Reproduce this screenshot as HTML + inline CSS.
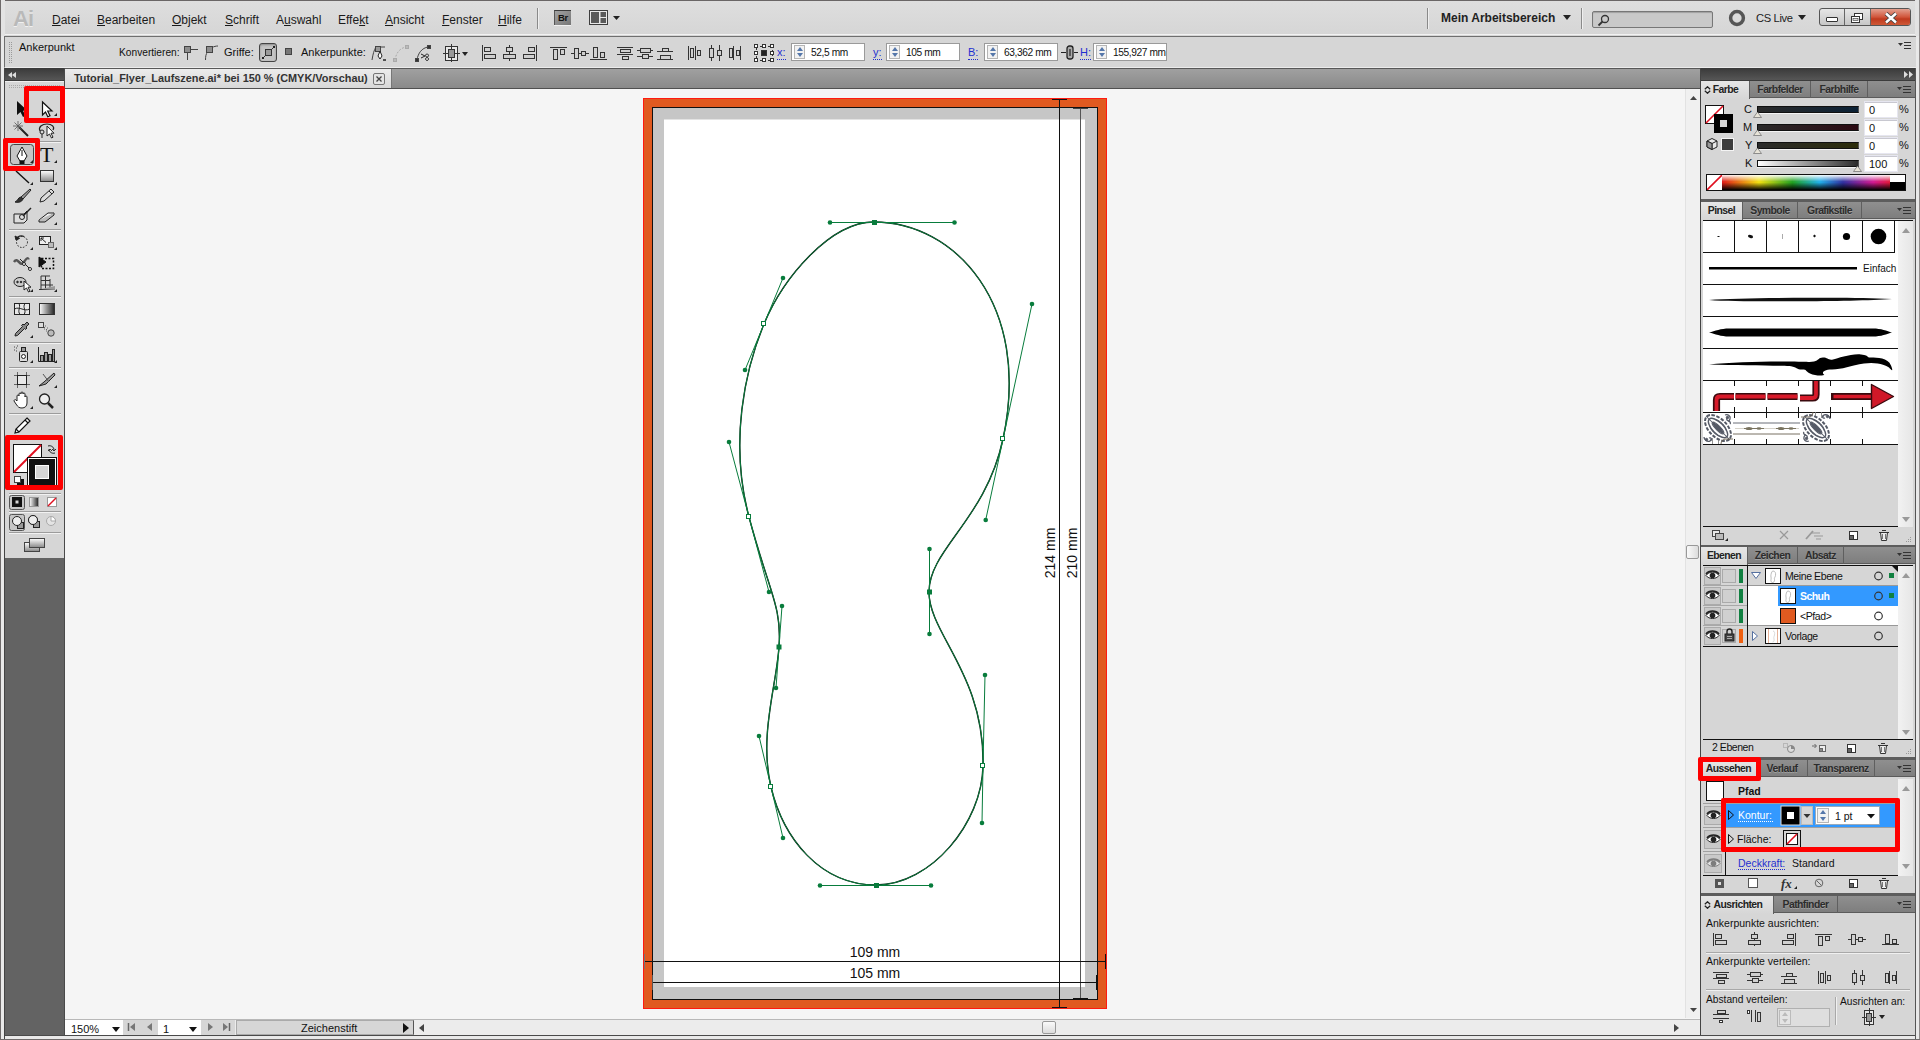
<!DOCTYPE html>
<html>
<head>
<meta charset="utf-8">
<title>Illustrator</title>
<style>
*{box-sizing:border-box;margin:0;padding:0}
html,body{width:1920px;height:1040px;overflow:hidden;background:#d6d6d6;font-family:"Liberation Sans",sans-serif;font-size:11px;color:#111}
.a{position:absolute}
.t{position:absolute;white-space:nowrap;line-height:1}
u{text-decoration:underline}
/* frame */
#frameL{left:0;top:0;width:5px;height:1040px;background:linear-gradient(90deg,#6e6a6a 0,#6e6a6a 1px,#e9e9e9 1px,#e9e9e9 4px,#444 4px)}
#frameR{left:1915px;top:0;width:5px;height:1040px;background:linear-gradient(90deg,#555 0,#555 1px,#e9e9e9 1px,#e9e9e9 4px,#8e8a8a 4px)}
#frameB{left:0;top:1035px;width:1920px;height:5px;background:linear-gradient(180deg,#4a4a4a 0,#4a4a4a 1px,#e9e9e9 1px,#e9e9e9 4px,#6e6a6a 4px)}
/* menubar */
#menubar{left:5px;top:0;width:1910px;height:36px;background:linear-gradient(180deg,#6a6666 0,#6a6666 1px,#dedede 1px,#d6d6d6 34px,#f2f2f2 34px,#f2f2f2 35px,#d6d6d6 35px)}
.mi{position:absolute;top:13px;font-size:12px;color:#1a1a1a;white-space:nowrap;line-height:15px}
.vsep{position:absolute;width:1px;background:#8a8a8a;box-shadow:1px 0 0 #efefef}
/* control bar */
#ctrl{left:4px;top:36px;width:1912px;height:32px;background:#d6d6d6;border-top:1px solid #6f6f6f;border-left:1px solid #6f6f6f;border-bottom:1px solid #ececec}
.ct{position:absolute;font-size:11px;color:#111;white-space:nowrap;line-height:13px}
.inp{position:absolute;background:#fff;border:1px solid #9a9a9a;height:18px}
.inp span{position:absolute;left:19px;top:2px;font-size:10.2px;letter-spacing:-.4px;line-height:13px;white-space:nowrap}
.spin{position:absolute;left:2px;top:1px;width:11px;height:14px;border:1px solid #b5b5b5;background:#f2f2f2}
.spin:before{content:"";position:absolute;left:2px;top:1px;border:3px solid transparent;border-bottom:4px solid #5577aa;border-top:0}
.spin:after{content:"";position:absolute;left:2px;top:7px;border:3px solid transparent;border-top:4px solid #5577aa;border-bottom:0}
.lbl{position:absolute;font-size:11px;color:#1f2fd0;line-height:13px;border-bottom:1px dotted #1f2fd0;white-space:nowrap}
/* tools */
#tools{left:5px;top:68px;width:60px;height:967px;background:#636363;border-right:1px solid #4a4a4a}
#toolsHead{left:0;top:0;width:59px;height:13px;background:linear-gradient(180deg,#3a3a3a,#555 90%,#2c2c2c)}
#toolsBody{left:0;top:13px;width:59px;height:477px;background:#d6d6d6;border-top:1px solid #efefef}
/* doc */
#tabbar{left:65px;top:68px;width:1635px;height:21px;background:linear-gradient(180deg,#a0a0a0,#8a8a8a);border-top:1px solid #585858;border-bottom:1px solid #505050}
#doctab{left:0;top:0;width:327px;height:19px;background:linear-gradient(180deg,#ececec,#d8d8d8);border-right:1px solid #777}
#canvas{left:65px;top:89px;width:1620px;height:930px;background:#f5f5f5;overflow:hidden}
#vscroll{left:1685px;top:89px;width:16px;height:929px;background:#f0f0f0;border-left:1px solid #e2e2e2}
#status{left:65px;top:1018px;width:1636px;height:17px;background:#ececec;border-top:1px solid #f5f5f5}
/* right dock */
#dock{left:1701px;top:68px;width:214px;height:967px;background:#5d5d5d}
#dockHead{left:0;top:0;width:214px;height:13px;background:linear-gradient(180deg,#3a3a3a,#555 90%,#2c2c2c)}
.panel{position:absolute;left:0;width:214px;background:#d6d6d6}
.tabs{position:absolute;left:0;top:0;width:214px;height:17px;background:linear-gradient(180deg,#8f8f8f,#7e7e7e);border-bottom:1px solid #5b5b5b}
.tab{position:absolute;top:0;height:17px;font-size:10.4px;letter-spacing:-.55px;font-weight:bold;color:#2c2c2c;line-height:18px;text-align:center;border-right:1px solid #5f5f5f;text-shadow:0 1px 0 rgba(255,255,255,.25)}
.tab.on{background:linear-gradient(180deg,#e6e6e6,#d6d6d6);height:18px;color:#222}
.sl{width:102px;height:7px;border:1px solid #111;border-right-color:#555;box-shadow:0 1px 0 #f4f4f4}
.vi{width:34px;height:17px;background:#fff;border:1px solid #e6e6f0;box-shadow:inset 0 1px 0 #c8c8d0}
.vi span{position:absolute;left:4px;top:3px;font-size:11px;line-height:11px}
.rb{border:5px solid #fe0000;border-radius:2px}
.pm{position:absolute;right:4px;top:5px;width:14px;height:8px}
</style>
</head>
<body>
<div id="frameB" class="a"></div><div id="frameL" class="a" style="height:1039px"></div><div id="frameR" class="a" style="height:1039px"></div>

<!-- MENUBAR -->
<div class="a" style="left:1px;top:0;width:4px;height:36px;background:#e3e3e3"></div>
<div class="a" style="left:1915px;top:0;width:4px;height:36px;background:#e3e3e3"></div>
<div id="menubar" class="a">
<div class="t" style="left:8px;top:8px;font-size:22px;font-weight:bold;color:#b9b9b9;letter-spacing:-1px;text-shadow:0 1px 0 #f0f0f0">Ai</div>
<div class="mi" style="left:47px"><u>D</u>atei</div>
<div class="mi" style="left:92px"><u>B</u>earbeiten</div>
<div class="mi" style="left:167px"><u>O</u>bjekt</div>
<div class="mi" style="left:220px"><u>S</u>chrift</div>
<div class="mi" style="left:271px">A<u>u</u>swahl</div>
<div class="mi" style="left:333px">Effe<u>k</u>t</div>
<div class="mi" style="left:380px"><u>A</u>nsicht</div>
<div class="mi" style="left:437px"><u>F</u>enster</div>
<div class="mi" style="left:493px"><u>H</u>ilfe</div>
<div class="vsep" style="left:532px;top:8px;height:21px"></div>
<!-- Br button -->
<div class="a" style="left:549px;top:10px;width:17px;height:15px;background:linear-gradient(135deg,#a2a2a2,#767676);border-top:1px solid #3a3a3a;border-left:1px solid #555;box-shadow:0 1px 0 #f0f0f0"><div class="t" style="left:3px;top:2px;font-size:9.5px;font-weight:bold;color:#111;letter-spacing:-.3px">Br</div></div>
<!-- arrange docs -->
<svg class="a" style="left:584px;top:10px" width="36" height="16" viewBox="0 0 36 16"><rect x="0.5" y="0.5" width="18" height="14" fill="#e8e8e8" stroke="#3e3e3e"/><rect x="2" y="2" width="8" height="11" fill="#5a5a5a"/><rect x="11.500" y="2" width="5.500" height="5" fill="#5a5a5a"/><rect x="11.500" y="8" width="5.500" height="5" fill="#5a5a5a"/><path d="M24,6h7l-3.5,4z" fill="#222"/></svg>
<!-- right side -->
<div class="vsep" style="left:1422px;top:8px;height:21px"></div>
<div class="t" style="left:1436px;top:12px;font-size:12px;font-weight:bold;color:#222">Mein Arbeitsbereich</div>
<svg class="a" style="left:1558px;top:15px" width="9" height="6"><path d="M0,0h8l-4,5z" fill="#222"/></svg>
<div class="vsep" style="left:1576px;top:8px;height:21px"></div>
<div class="a" style="left:1587px;top:11px;width:121px;height:17px;background:#c9c9c9;border:1px solid #777;border-radius:2px;box-shadow:inset 0 1px 1px rgba(0,0,0,.2)"><svg class="a" style="left:4px;top:2px" width="14" height="13" viewBox="0 0 14 13"><circle cx="8" cy="5" r="3.5" fill="none" stroke="#333" stroke-width="1.3"/><path d="M5.5,7.5L1.5,11.5" stroke="#333" stroke-width="1.8"/></svg></div>
<svg class="a" style="left:1723px;top:9px" width="18" height="18" viewBox="0 0 18 18"><circle cx="9" cy="9" r="6.400" fill="none" stroke="#555" stroke-width="3.500"/></svg>
<div class="t" style="left:1751px;top:13px;font-size:11.2px;letter-spacing:-.35px;color:#222">CS Live</div>
<svg class="a" style="left:1793px;top:15px" width="9" height="6"><path d="M0,0h8l-4,5z" fill="#222"/></svg>
<!-- window buttons -->
<div class="a" style="left:1814px;top:8px;width:92px;height:18px;border:1px solid #555;border-radius:3px;background:linear-gradient(180deg,#e6e6e6,#c6c6c6);overflow:hidden">
  <div class="a" style="left:24px;top:0;width:1px;height:18px;background:#666"></div>
  <div class="a" style="left:50px;top:0;width:1px;height:18px;background:#666"></div>
  <div class="a" style="left:51px;top:0;width:41px;height:18px;background:linear-gradient(180deg,#e3a08f 0,#d1553a 45%,#bf3a1e 55%,#d4633f 100%)"></div>
  <div class="a" style="left:6px;top:8px;width:12px;height:5px;border:1px solid #333;background:#fff;border-radius:1px"></div>
  <svg class="a" style="left:30px;top:3px" width="14" height="12" viewBox="0 0 14 12"><rect x="4.5" y="1.5" width="8" height="6" fill="#fff" stroke="#333"/><rect x="1.5" y="4.5" width="8" height="6" fill="#fff" stroke="#333"/><rect x="3" y="6.5" width="5" height="2" fill="#ddd" stroke="#333" stroke-width=".6"/></svg>
  <svg class="a" style="left:64px;top:3px" width="14" height="12" viewBox="0 0 14 12"><path d="M2,1.5L12,10.5M12,1.5L2,10.5" stroke="#444" stroke-width="4.2"/><path d="M2,1.5L12,10.5M12,1.5L2,10.5" stroke="#fff" stroke-width="2.4"/></svg>
</div>
</div>

<!-- CONTROL BAR -->
<div id="ctrl" class="a">
<!-- ctrl coords: page x-5, y-37 -->
<svg class="a" style="left:4px;top:5px" width="4" height="22"><g fill="#9a9a9a"><rect x="0" y="0" width="1" height="1"/><rect x="2" y="0" width="1" height="1"/><rect x="0" y="2" width="1" height="1"/><rect x="2" y="2" width="1" height="1"/><rect x="0" y="4" width="1" height="1"/><rect x="2" y="4" width="1" height="1"/><rect x="0" y="6" width="1" height="1"/><rect x="2" y="6" width="1" height="1"/><rect x="0" y="8" width="1" height="1"/><rect x="2" y="8" width="1" height="1"/><rect x="0" y="10" width="1" height="1"/><rect x="2" y="10" width="1" height="1"/><rect x="0" y="12" width="1" height="1"/><rect x="2" y="12" width="1" height="1"/><rect x="0" y="14" width="1" height="1"/><rect x="2" y="14" width="1" height="1"/><rect x="0" y="16" width="1" height="1"/><rect x="2" y="16" width="1" height="1"/><rect x="0" y="18" width="1" height="1"/><rect x="2" y="18" width="1" height="1"/><rect x="0" y="20" width="1" height="1"/><rect x="2" y="20" width="1" height="1"/></g></svg>
<div class="ct" style="left:14px;top:4px">Ankerpunkt</div>
<div class="ct" style="left:114px;top:9px;font-size:10.2px">Konvertieren:</div>
<svg class="a" style="left:176px;top:7px" width="46" height="18" viewBox="0 0 46 18"><g stroke="#444" fill="none"><path d="M6.5,8v8M10,5.5h7"/><rect x="3.5" y="2.5" width="6" height="6" fill="#8d8d8d"/><path d="M24.5,16c0-4,.5-6,2-8M31,3.5c2,-1,4,-1.5,6,-1.5"/><rect x="25.500" y="2.500" width="6" height="6" fill="#8d8d8d"/></g></svg>
<div class="ct" style="left:219px;top:9px">Griffe:</div>
<div class="a" style="left:254px;top:6px;width:18px;height:19px;border:1px solid #444;border-radius:3px;background:#c4c4c4;box-shadow:inset 0 1px 2px rgba(0,0,0,.3)"><svg class="a" style="left:1px;top:1px" width="15" height="15" viewBox="0 0 15 15"><path d="M2,13L13,2" stroke="#333"/><rect x="4.500" y="4.500" width="6" height="6" fill="#9a9a9a" stroke="#333"/><rect x="1" y="12" width="2" height="2" fill="#222"/><rect x="12" y="1" width="2" height="2" fill="#222"/></svg></div>
<svg class="a" style="left:278px;top:9px" width="12" height="12"><rect x="2.500" y="2.500" width="6" height="6" fill="#777" stroke="#444"/></svg>
<div class="ct" style="left:296px;top:9px">Ankerpunkte:</div>
<!-- anchor tools -->
<svg class="a" style="left:366px;top:6px" width="100" height="20" viewBox="0 0 100 20">
 <g fill="none" stroke="#444"><path d="M1,17c1,-6 2,-10 4,-13h9"/><rect x="4.500" y="3.500" width="5" height="5" fill="#999"/><path d="M9,8l-2,5l2,3l2,-3z" fill="#fff" stroke="#222"/><path d="M12,17h3" stroke="#222" stroke-width="1.5"/></g>
 <g fill="none" stroke="#aaa"><path d="M24,17c1,-7 5,-12 11,-13" stroke-dasharray="2 1.5"/><rect x="22.500" y="15.500" width="3" height="3" fill="#bbb"/><rect x="34.500" y="2.500" width="3" height="3" fill="#bbb"/></g>
 <g fill="none" stroke="#444"><path d="M46,17c1,-7 5,-12 11,-13"/><rect x="44.500" y="15.500" width="3" height="3" fill="#333"/><rect x="56.500" y="2.500" width="3" height="3" fill="#333"/><path d="M50,11l4,2l-4,2M56,11a1.500,1.500 0 1 0 .1,0M56,14.500a1.500,1.500 0 1 0 .1,0" stroke="#222"/></g>
 <g><rect x="74.500" y="3.500" width="12" height="14" fill="#e8e8e8" stroke="#333"/><rect x="77.500" y="6.500" width="6" height="8" fill="#999" stroke="#333"/><path d="M80.500,1v5M80.500,15v4M72,10.500h5M84,10.500h5" stroke="#333"/><path d="M91,9h6l-3,4z" fill="#222"/></g>
</svg>
<!-- align icons group 1 -->
<svg class="a" style="left:475px;top:7px" width="268" height="18" viewBox="0 0 268 18" shape-rendering="crispEdges">
 <g fill="#d0d0d0" stroke="#333">
  <path d="M2.500,1v16" /><rect x="4.500" y="3.500" width="6" height="4"/><rect x="4.500" y="10.500" width="11" height="4"/>
  <path d="M29.500,1v16"/><rect x="26.500" y="3.500" width="6" height="4"/><rect x="23.500" y="10.500" width="12" height="4"/>
  <path d="M56.500,1v16"/><rect x="48.500" y="3.500" width="6" height="4"/><rect x="43.500" y="10.500" width="11" height="4"/>
  <path d="M70,3.500h17"/><rect x="73.500" y="5.500" width="4" height="10"/><rect x="80.500" y="5.500" width="4" height="5"/>
  <path d="M91,9.500h18"/><rect x="94.500" y="4.500" width="4" height="10"/><rect x="101.500" y="7.500" width="4" height="4"/>
  <path d="M110,15.500h17"/><rect x="113.500" y="3.500" width="4" height="10"/><rect x="120.500" y="8.500" width="4" height="5"/>
  <g transform="translate(-3,0)"><path d="M140,3.500h16M140,10.500h16"/><rect x="143.500" y="5.500" width="10" height="3"/><rect x="145.500" y="12.500" width="6" height="3"/>
  <path d="M160,6.500h16M160,12.500h16"/><rect x="163.500" y="4.500" width="10" height="4"/><rect x="165.500" y="10.500" width="6" height="4"/>
  <path d="M180,7.500h16M180,15.500h16"/><rect x="185.500" y="4.500" width="6" height="3"/><rect x="183.500" y="11.500" width="10" height="4"/>
  <path d="M211.500,2v14M218.500,2v14"/><rect x="213.500" y="4.500" width="3" height="9"/><rect x="220.500" y="6.500" width="3" height="5"/>
  <path d="M234.500,1v16M242.500,1v16"/><rect x="232.500" y="4.500" width="4" height="9"/><rect x="240.500" y="6.500" width="4" height="5"/>
  <path d="M256.500,2v14M263.500,2v14"/><rect x="252.500" y="4.500" width="3" height="9"/><rect x="259.500" y="6.500" width="3" height="5"/></g>
 </g>
</svg>
<!-- reference point -->
<svg class="a" style="left:748px;top:6px" width="22" height="20" viewBox="0 0 22 20" shape-rendering="crispEdges"><g fill="#fff" stroke="#333"><path d="M3,3h16v14h-16z" fill="none" stroke-dasharray="2 2"/><rect x="1.500" y="1.500" width="3" height="3"/><rect x="9.500" y="1.500" width="3" height="3"/><rect x="17.500" y="1.500" width="3" height="3"/><rect x="1.500" y="8.500" width="3" height="3"/><rect x="17.500" y="8.500" width="3" height="3"/><rect x="1.500" y="15.500" width="3" height="3"/><rect x="9.500" y="15.500" width="3" height="3"/><rect x="17.500" y="15.500" width="3" height="3"/><rect x="8.500" y="7.500" width="5" height="5" fill="#222"/></g></svg>
<div class="lbl" style="left:772px;top:9px">x:</div>
<div class="inp" style="left:786px;top:6px;width:74px"><div class="spin"></div><span>52,5 mm</span></div>
<div class="lbl" style="left:868px;top:9px">y:</div>
<div class="inp" style="left:881px;top:6px;width:74px"><div class="spin"></div><span>105 mm</span></div>
<div class="lbl" style="left:963px;top:9px">B:</div>
<div class="inp" style="left:979px;top:6px;width:74px"><div class="spin"></div><span>63,362 mm</span></div>
<svg class="a" style="left:1056px;top:7px" width="18" height="18" viewBox="0 0 18 18"><path d="M0,8.500h5M13,8.500h4" stroke="#222" stroke-width="1.2"/><rect x="6" y="2" width="6" height="13" rx="2.500" fill="#aaa" stroke="#222" stroke-width="1.300"/><path d="M9,5v7" stroke="#222" stroke-width="1.200"/></svg>
<div class="lbl" style="left:1075px;top:9px">H:</div>
<div class="inp" style="left:1088px;top:6px;width:74px"><div class="spin"></div><span>155,927 mm</span></div>
<!-- panel menu -->
<svg class="a" style="left:1893px;top:4px" width="14" height="9" viewBox="0 0 14 9"><path d="M0,2h5l-2.500,3z" fill="#333"/><path d="M6,1.500h7M6,4.500h7M6,7.500h7" stroke="#333"/></svg>
</div>

<!-- TOOLS -->
<div id="tools" class="a">
<div id="toolsHead" class="a"><svg class="a" style="left:3px;top:4px" width="10" height="6"><path d="M4,0v6l-4,-3zM8,0v6l-4,-3z" fill="#ddd"/></svg></div>
<div id="toolsBody" class="a">
<!-- toolsBody coords: page x-5, y-82 (1px border-top) -->
<svg class="a" style="left:0;top:0" width="59" height="476" viewBox="5 82 59 476">
<defs>
 <linearGradient id="gH" x1="0" x2="1"><stop offset="0" stop-color="#fff"/><stop offset="1" stop-color="#222"/></linearGradient>
 <linearGradient id="gV" x1="0" x2="0" y1="0" y2="1"><stop offset="0" stop-color="#fff"/><stop offset="1" stop-color="#888"/></linearGradient>
 <path id="tri" d="M0,3L3,0V3z" fill="#222"/>
</defs>
<!-- grip -->
<g fill="#aaa"><path d="M9,85h1v1h-1zM11,85h1v1h-1zM13,85h1v1h-1zM15,85h1v1h-1zM17,85h1v1h-1zM19,85h1v1h-1zM21,85h1v1h-1zM23,85h1v1h-1zM25,85h1v1h-1zM27,85h1v1h-1zM29,85h1v1h-1zM31,85h1v1h-1zM33,85h1v1h-1zM35,85h1v1h-1zM37,85h1v1h-1zM39,85h1v1h-1zM41,85h1v1h-1zM43,85h1v1h-1zM45,85h1v1h-1zM47,85h1v1h-1zM49,85h1v1h-1zM51,85h1v1h-1zM53,85h1v1h-1zM55,85h1v1h-1zM57,85h1v1h-1zM59,85h1v1h-1z"/><path d="M9,87h1v1h-1zM11,87h1v1h-1zM13,87h1v1h-1zM15,87h1v1h-1zM17,87h1v1h-1zM19,87h1v1h-1zM21,87h1v1h-1zM23,87h1v1h-1zM25,87h1v1h-1zM27,87h1v1h-1zM29,87h1v1h-1zM31,87h1v1h-1zM33,87h1v1h-1zM35,87h1v1h-1zM37,87h1v1h-1zM39,87h1v1h-1zM41,87h1v1h-1zM43,87h1v1h-1zM45,87h1v1h-1zM47,87h1v1h-1zM49,87h1v1h-1zM51,87h1v1h-1zM53,87h1v1h-1zM55,87h1v1h-1zM57,87h1v1h-1zM59,87h1v1h-1z"/></g>
<!-- separators -->
<g stroke="#9c9c9c" shape-rendering="crispEdges"><path d="M9,141.500h52M9,229.500h52M9,296.500h52M9,342.500h52M9,367.500h52M9,413.500h52M9,493.500h52M9,511.500h52M9,532.500h52"/></g>
<g stroke="#f2f2f2" shape-rendering="crispEdges"><path d="M9,142.500h52M9,230.500h52M9,297.500h52M9,343.500h52M9,368.500h52M9,414.500h52M9,494.500h52M9,512.500h52M9,533.500h52"/></g>
<!-- row1: selection / direct selection -->
<path d="M17,101v14l3.500,-3l2.500,5l2.500,-1.200l-2.500,-5h4.500z" fill="#111"/>
<path d="M42.500,102v13l3,-3l2.300,4.800l2.200,-1l-2.300,-4.800h4.300z" fill="#fff" stroke="#111" stroke-width="1.200"/>
<use href="#tri" x="54" y="113"/>
<!-- row2: wand / lasso -->
<g stroke="#222" fill="none"><path d="M19,127l9,9" stroke-width="2"/><path d="M18,121v10M13,126h10M14.500,122.500l7,7M21.500,122.500l-7,7" stroke="#555" stroke-width=".8"/></g>
<g stroke="#222" fill="none"><path d="M40,131c-2,-4 2,-7 7,-7s8,3 6,6" stroke-width="1.200"/><circle cx="42" cy="132" r="2" /><path d="M42,134v4"/><path d="M47,126v10l2.500,-2l2,4l1.500,-.8l-2,-4h3z" fill="#fff"/></g>
<!-- row3: pen (active) / type -->
<rect x="10.500" y="144.500" width="23" height="20" rx="3" fill="#c6c6c6" stroke="#444"/>
<g stroke="#111" fill="#fff"><path d="M22,147l5,9l-3,5h-4l-3,-5z"/><path d="M22,150v6" /><rect x="20" y="161" width="4" height="2.500" fill="#111"/></g>
<use href="#tri" x="30" y="160"/>
<text x="40" y="162" font-family="Liberation Serif" font-size="22" fill="#111">T</text>
<use href="#tri" x="54" y="160"/>
<!-- row4: line / rect -->
<path d="M16,171l13,12" stroke="#111" stroke-width="1.400"/><use href="#tri" x="30" y="182"/>
<rect x="40.500" y="170.500" width="13" height="11" fill="url(#gV)" stroke="#333"/><use href="#tri" x="54" y="182"/>
<!-- row5: brush / pencil -->
<g stroke="#222" fill="#999"><path d="M30,189l-9,8l2,2l8,-9z"/><path d="M21,197c-3,0 -3,4 -6,5c3,1 7,0 8,-3z" fill="#333"/></g>
<g stroke="#222" fill="#ddd"><path d="M51,189l3,3l-10,9l-4,1l1,-4z"/><path d="M49,191l3,3" /></g><use href="#tri" x="54" y="202"/>
<!-- row6: blob / eraser -->
<g stroke="#222" fill="#ddd"><path d="M14,214h10l3,-3v9l-3,3h-10z"/><path d="M31,208l-8,8" stroke-width="1.500"/><circle cx="22" cy="217" r="2.500" fill="none"/></g>
<g stroke="#222" fill="#eee"><path d="M39,220l9,-7h6l-9,7z"/><path d="M39,220v2h6l9,-7v-2" fill="#bbb"/></g><use href="#tri" x="54" y="222"/>
<!-- row7: rotate / scale -->
<g stroke="#222" fill="none"><circle cx="22" cy="242" r="5.500" stroke-dasharray="1.500 1.500"/><path d="M16,239a6,6 0 0 1 8,-2.500" stroke-width="1.200"/><path d="M15,236l1,4l3.500,-1.500z" fill="#222"/></g><use href="#tri" x="30" y="247"/>
<g stroke="#222" fill="#eee"><rect x="39.500" y="236.500" width="11" height="8"/><rect x="48.500" y="242.500" width="5" height="5" fill="#bbb" stroke="#666"/><path d="M41,238l5,4.500M41,238h3M41,238v3" fill="none"/></g><use href="#tri" x="54" y="247"/>
<!-- row8: width / free transform -->
<g stroke="#222" fill="none"><path d="M14,262c4,-6 6,6 10,0s4,-3 5,-4" stroke-width="2.500" stroke="#555"/><path d="M20,259l10,10"/><circle cx="24" cy="264" r="1.500" fill="#fff"/><circle cx="30" cy="269" r="1.500" fill="#fff"/></g>
<g stroke="#111" fill="none"><rect x="41.500" y="258.500" width="12" height="10" stroke-dasharray="2 1.500" stroke-width="1.500"/><path d="M39,257v10l7,-5z" fill="#111"/></g>
<!-- row9: shape builder / perspective grid -->
<g stroke="#222" fill="#ccc"><ellipse cx="20" cy="282" rx="6" ry="4.500"/><circle cx="17.500" cy="282" r=".8" fill="#222"/><circle cx="21" cy="282" r=".8" fill="#222"/><path d="M24,281v9l2.500,-2l2,4l1.500,-.8l-2,-4h3z" fill="#fff"/></g><use href="#tri" x="30" y="289"/>
<g stroke="#333" fill="none"><path d="M41,276v13M45.500,276v13M50,279v10M41,276h9M41,280.500h9M41,285h12M39,289.500h16" /><path d="M41,289l14,-3v4z" fill="#999" stroke="none"/></g><use href="#tri" x="54" y="289"/>
<!-- row10: mesh / gradient -->
<g stroke="#222" fill="#e8e8e8"><rect x="14.500" y="303.500" width="15" height="11"/><path d="M14.500,309c5,-3 10,3 15,0M19,303.500c2,4 -2,7 1,11M25,303.500c-3,4 2,7 -1,11" fill="none"/></g>
<rect x="39.500" y="303.500" width="15" height="11" fill="url(#gH)" stroke="#333"/>
<!-- row11: eyedropper / blend -->
<g stroke="#222" fill="#888"><path d="M29,324l-2,-2l-3,3l-1,-1l-1.500,1.500l1,1l-7,7l-.5,2.500l2.500,-.5l7,-7l1,1l1.500,-1.500l-1,-1z"/></g><use href="#tri" x="30" y="335"/>
<g stroke="#444" fill="#ddd"><rect x="38.500" y="322.500" width="5" height="5"/><circle cx="51" cy="333" r="3.200" fill="#bbb"/><path d="M44,327l1,1M46,329l1,1M45,326h1M47,328h1M44,329h1M46,331h1" stroke="#666"/></g>
<!-- row12: symbol sprayer / graph -->
<g stroke="#222" fill="#ddd"><rect x="19.500" y="351.500" width="8" height="10" rx="1"/><rect x="21.500" y="347.500" width="4" height="4" fill="#999"/><circle cx="23.500" cy="356.500" r="2" fill="#fff"/><path d="M14,347h1M16,348h1M14,350h1M17,346h1M16,351h1" stroke="#444"/></g><use href="#tri" x="30" y="360"/>
<g stroke="#222" fill="#999"><path d="M38.500,347v14.500h16" fill="none"/><rect x="40.500" y="355.500" width="3" height="6"/><rect x="44.500" y="352.500" width="3" height="9"/><rect x="48.500" y="354.500" width="3" height="7"/><rect x="52.500" y="349.500" width="2" height="12"/></g><use href="#tri" x="54" y="360"/>
<!-- row13: artboard / slice -->
<g stroke="#222" fill="none"><rect x="17.500" y="375.500" width="9" height="9" fill="#e8e8e8"/><path d="M14,375.500h3M27,375.500h3M14,384.500h3M27,384.500h3M17.500,372v3M26.500,372v3M17.500,385v3M26.500,385v3" stroke="#666"/></g>
<g stroke="#222" fill="#999"><path d="M54,373l-10,9l-5,4l7,-2l9,-9z"/><path d="M43,374l6,8" fill="none" stroke="#555"/></g><use href="#tri" x="54" y="385"/>
<!-- row14: hand / zoom -->
<g stroke="#222" fill="#fff"><path d="M17,401v-5a1,1 0 0 1 2,0v-2a1,1 0 0 1 2,0v-1a1,1 0 0 1 2,0v1a1,1 0 0 1 2,0v3a1,1 0 0 1 2,0v6c0,3 -2,5 -5,5s-4,-1 -6,-4l-2,-3c0,-1 1,-2 2,-1z"/></g><use href="#tri" x="30" y="406"/>
<g stroke="#222" fill="#eee"><circle cx="44.500" cy="399" r="5" stroke-width="1.300"/><path d="M48,403l5,5" stroke-width="2.500"/></g>
<!-- row15: single tool -->
<g stroke="#111" fill="#fff" stroke-width="1.200"><path d="M27,418l3,3l-11,11l-4,1l1,-4z"/><path d="M25,420l3,3M16,429l3,3" /></g>
<!-- fill / stroke -->
<rect x="13.500" y="444.500" width="28" height="28" fill="#fff" stroke="#111"/>
<path d="M14,472L41,445" stroke="#e01020" stroke-width="2"/>
<rect x="28.500" y="458.500" width="27" height="27" fill="#111" stroke="#fff"/><rect x="27.500" y="457.500" width="29" height="29" fill="none" stroke="#111"/>
<rect x="35.500" y="465.500" width="13" height="13" fill="#d6d6d6" stroke="#fff"/>
<g stroke="#222" fill="none"><path d="M48,446c3,-1 6,1 6,4M55,453c-3,1 -6,-1 -6,-4" /><path d="M52,449l2,2l2,-2M52,451l-2,-2l-2,2" stroke-width=".9"/></g>
<rect x="17.500" y="479.500" width="6" height="6" fill="#111" stroke="#111"/><rect x="14.500" y="476.500" width="6" height="6" fill="#fff" stroke="#444"/>
<!-- color modes -->
<rect x="9.500" y="495.500" width="15" height="14" rx="2" fill="#c6c6c6" stroke="#555"/>
<rect x="12.500" y="497.500" width="9" height="9" fill="#111" stroke="#111"/><rect x="15.500" y="500.500" width="3" height="3" fill="#d6d6d6"/>
<rect x="29.500" y="497.500" width="9" height="9" fill="url(#gH)" stroke="#999"/>
<rect x="47.500" y="497.500" width="9" height="9" fill="#fff" stroke="#999"/><path d="M48,506l8,-8" stroke="#e01020" stroke-width="1.500"/>
<!-- draw modes -->
<rect x="9.500" y="514.500" width="15" height="16" rx="2" fill="#c6c6c6" stroke="#555"/>
<g stroke="#222" fill="#eee"><rect x="17.500" y="522.500" width="6" height="6" fill="#999"/><circle cx="17" cy="521" r="4.500"/><circle cx="33" cy="520" r="4.500"/><rect x="33.500" y="521.500" width="6" height="6" fill="#999"/><circle cx="33" cy="520" r="4.500"/></g>
<circle cx="51" cy="521" r="4.500" fill="#e4e4e4" stroke="#aaa"/><path d="M51,521v-4.500a4.500,4.500 0 0 1 4.500,4.500z" fill="#fff" stroke="#aaa"/>
<!-- screen mode -->
<rect x="24.500" y="542.500" width="15" height="9" fill="url(#gV)" stroke="#444"/><rect x="29.500" y="538.500" width="15" height="9" fill="url(#gV)" stroke="#444"/>
</svg>
</div>
</div>

<!-- DOCUMENT -->
<div id="tabbar" class="a"><div id="doctab" class="a">
<div class="t" style="left:9px;top:4px;font-size:10.9px;font-weight:bold;color:#333">Tutorial_Flyer_Laufszene.ai* bei 150 % (CMYK/Vorschau)</div>
<svg class="a" style="left:308px;top:4px" width="13" height="12" viewBox="0 0 13 12"><rect x=".5" y=".5" width="11" height="11" rx="1.500" fill="#e4e4e4" stroke="#777"/><path d="M3.500,3.500l5,5M8.500,3.500l-5,5" stroke="#444" stroke-width="1.300"/></svg>
</div></div>
<div id="canvas" class="a">
<!-- canvas coords: page x-65, y-89 -->
<svg class="a" style="left:0;top:0" width="1620" height="929" viewBox="65 89 1620 929" shape-rendering="crispEdges">
  <!-- orange bleed rect with red selection edge -->
  <rect x="643.5" y="98.5" width="463" height="910" fill="#e05a20" stroke="#ff1a10" stroke-width="1"/>
  <!-- grey template + black frame -->
  <rect x="652.5" y="107.5" width="445" height="892" fill="#c6c6c6" stroke="#111" stroke-width="1"/>
  <!-- white page -->
  <rect x="664" y="119.500" width="421" height="867.500" fill="#ffffff" shape-rendering="auto"/>
  <!-- dimension lines vertical -->
  <line x1="1059.5" y1="99" x2="1059.5" y2="1007" stroke="#111"/>
  <line x1="1052" y1="99.5" x2="1067" y2="99.5" stroke="#111"/>
  <line x1="1052" y1="1007.5" x2="1067" y2="1007.5" stroke="#111"/>
  <line x1="1080.5" y1="108" x2="1080.5" y2="999" stroke="#555"/>
  <line x1="1073" y1="108.5" x2="1088" y2="108.5" stroke="#444"/>
  <line x1="1073" y1="998.5" x2="1088" y2="998.5" stroke="#111" stroke-width="2"/>
  <!-- dimension lines horizontal -->
  <line x1="644" y1="961.5" x2="1106" y2="961.5" stroke="#111"/>
  <line x1="644.5" y1="954" x2="644.5" y2="969" stroke="#777"/>
  <line x1="1105.5" y1="954" x2="1105.5" y2="969" stroke="#111"/>
  <line x1="652" y1="982.5" x2="1098" y2="982.5" stroke="#111"/>
  <line x1="652.5" y1="975" x2="652.5" y2="990" stroke="#555"/>
  <line x1="1097" y1="975" x2="1097" y2="990" stroke="#111" stroke-width="2"/>
</svg>
<div class="t" style="left:784px;top:856px;width:52px;text-align:center;font-size:14px;color:#111">109 mm</div>
<div class="t" style="left:784px;top:877px;width:52px;text-align:center;font-size:14px;color:#111">105 mm</div>
<svg class="a" style="left:0;top:0" width="1620" height="929" viewBox="65 89 1620 929">
  <text transform="translate(1055,553) rotate(-90)" text-anchor="middle" font-family="Liberation Sans" font-size="14" fill="#111">214 mm</text>
  <text transform="translate(1077,553) rotate(-90)" text-anchor="middle" font-family="Liberation Sans" font-size="14" fill="#111">210 mm</text>
  <!-- shoe path: black stroke + green selection -->
  <path id="shoe" d="M874,222 C954.5,222 1032,304 1003,439 C985.7,520 929,549 929,592 C929,634 985,675 983,766 C982,823 931,885 876,885 C820,885 783,838 771,787 C759,736 776,688 779,647 C782,606 769,592 749,517 C729,442 745,370 764,324 C783,278 830,222 874,222 Z" fill="none" stroke="#0c1a12" stroke-width="1.4"/>
  <path d="M874,222 C954.5,222 1032,304 1003,439 C985.7,520 929,549 929,592 C929,634 985,675 983,766 C982,823 931,885 876,885 C820,885 783,838 771,787 C759,736 776,688 779,647 C782,606 769,592 749,517 C729,442 745,370 764,324 C783,278 830,222 874,222 Z" fill="none" stroke="#087c3c" stroke-width="1"/>
  <g stroke="#087c3c" stroke-width="1" fill="#087c3c">
    <path d="M830,222.500H954.500 M783,278L745,370 M729,442L749,517L769,592 M1032,304L985.700,520 M929.500,549V634 M985,675L983,766L982,823 M820,885.500H931 M759,736L771,787L783,838 M782,606L779,647L776,688" fill="none"/>
    <g stroke="none"><circle cx="830" cy="222.500" r="2.300"/><circle cx="954.500" cy="222.500" r="2.300"/>
    <circle cx="783" cy="278" r="2.300"/><circle cx="745" cy="370" r="2.300"/>
    <circle cx="729" cy="442" r="2.300"/><circle cx="769" cy="592" r="2.300"/>
    <circle cx="1032" cy="304" r="2.300"/><circle cx="985.700" cy="520" r="2.300"/>
    <circle cx="929.500" cy="549" r="2.300"/><circle cx="929.500" cy="634" r="2.300"/>
    <circle cx="985" cy="675" r="2.300"/><circle cx="982" cy="823" r="2.300"/>
    <circle cx="820" cy="885.500" r="2.300"/><circle cx="931" cy="885.500" r="2.300"/>
    <circle cx="759" cy="736" r="2.300"/><circle cx="783" cy="838" r="2.300"/>
    <circle cx="782" cy="606" r="2.300"/><circle cx="776" cy="688" r="2.300"/>
    <!-- anchors -->
    <rect x="872" y="220" width="5" height="5"/>
    <rect x="927" y="589.500" width="5" height="5"/>
    <rect x="874" y="883" width="5" height="5"/>
    <rect x="776.500" y="644.500" width="5" height="5"/></g>
    <g fill="#fff" shape-rendering="crispEdges">
      <rect x="761.500" y="321.500" width="4" height="4"/>
      <rect x="746.500" y="514.500" width="4" height="4"/>
      <rect x="1000.500" y="436.500" width="4" height="4"/>
      <rect x="980.500" y="763.500" width="4" height="4"/>
      <rect x="768.500" y="784.500" width="4" height="4"/>
    </g>
  </g>
</svg>
</div>
<div id="vscroll" class="a">
<svg class="a" style="left:4px;top:7px" width="8" height="5"><path d="M0,4h7l-3.500,-4z" fill="#444"/></svg>
<svg class="a" style="left:4px;top:919px" width="8" height="5"><path d="M0,0h7l-3.500,4z" fill="#444"/></svg>
<div class="a" style="left:0px;top:456px;width:13px;height:14px;border:1px solid #999;border-radius:2px;background:linear-gradient(90deg,#fafafa,#dcdcdc)"></div>
</div>
<div id="status" class="a">
<!-- status coords: page x-65, y-1018 -->
<div class="a" style="left:0;top:0;width:1636px;height:1px;background:#b8b8b8"></div>
<div class="a" style="left:0;top:1px;width:58px;height:15px;background:#fff"></div>
<div class="t" style="left:6px;top:5px;font-size:11px">150%</div>
<svg class="a" style="left:47px;top:8px" width="9" height="6"><path d="M0,0h8l-4,5z" fill="#111"/></svg>
<div class="a" style="left:58px;top:1px;width:35px;height:15px;background:#d6d6d6"></div>
<svg class="a" style="left:62px;top:3px" width="30" height="11" viewBox="0 0 30 11"><path d="M1.500,1v8" stroke="#666" stroke-width="1.500"/><path d="M8,1v8l-5,-4zM25,1v8l-5,-4z" fill="#777"/></svg>
<div class="a" style="left:93px;top:1px;width:43px;height:15px;background:#fff"></div>
<div class="t" style="left:98px;top:5px;font-size:11px">1</div>
<svg class="a" style="left:124px;top:8px" width="9" height="6"><path d="M0,0h8l-4,5z" fill="#111"/></svg>
<div class="a" style="left:136px;top:1px;width:34px;height:15px;background:#d6d6d6"></div>
<svg class="a" style="left:141px;top:3px" width="30" height="11" viewBox="0 0 30 11"><path d="M2,1v8l5,-4zM17,1v8l5,-4z" fill="#777"/><path d="M23.500,1v8" stroke="#666" stroke-width="1.500"/></svg>
<div class="a" style="left:171px;top:1px;width:178px;height:15px;background:#d6d6d6;border:1px solid #aaa;border-right:1px solid #555"></div>
<div class="t" style="left:236px;top:4px;font-size:11px">Zeichenstift</div>
<svg class="a" style="left:338px;top:4px" width="7" height="10"><path d="M0,0v10l6,-5z" fill="#111"/></svg>
<svg class="a" style="left:354px;top:5px" width="6" height="8"><path d="M5,0v8l-5,-4z" fill="#444"/></svg>
<svg class="a" style="left:1609px;top:5px" width="6" height="8"><path d="M0,0v8l5,-4z" fill="#444"/></svg>
<div class="a" style="left:977px;top:2px;width:14px;height:13px;border:1px solid #999;border-radius:2px;background:linear-gradient(180deg,#fafafa,#dcdcdc)"></div>
</div>

<div class="a" style="left:1700px;top:68px;width:1px;height:967px;background:#444"></div>
<!-- RIGHT DOCK -->
<div id="dock" class="a">
<div id="dockHead" class="a"></div>
<svg class="a" style="left:203px;top:3px" width="10" height="7"><path d="M0,0v7l4,-3.500zM5,0v7l4,-3.500z" fill="#ddd"/></svg>
<!-- dock coords: page x-1701, y-68 -->
<!-- ===== FARBE ===== -->
<div class="panel" style="top:13px;height:118px">
 <div class="tabs">
  <div class="tab on" style="left:0;width:49px;padding-left:1px">Farbe</div>
  <div class="tab" style="left:49px;width:61px">Farbfelder</div>
  <div class="tab" style="left:110px;width:57px">Farbhilfe</div>
  <svg class="a" style="left:3px;top:5px" width="7" height="8" viewBox="0 0 7 8"><path d="M.8,3.200l2.700,-2.500l2.700,2.500M.8,4.800l2.700,2.500l2.700,-2.500" fill="none" stroke="#222" stroke-width="1.200"/></svg>
  <svg class="pm" viewBox="0 0 14 8"><path d="M0,1h5l-2.500,3z" fill="#333"/><path d="M6,.5h8M6,3.500h8M6,6.500h8" stroke="#333"/></svg>
 </div>
 <!-- fill/stroke swatch (panel coords: page x-1701,y-81) -->
 <svg class="a" style="left:0;top:18px" width="60" height="80" viewBox="1701 99 60 80">
  <rect x="1705.500" y="105.500" width="18" height="18" fill="#fff" stroke="#111"/><path d="M1706,123l17,-17" stroke="#e01020" stroke-width="1.600"/>
  <rect x="1714" y="114" width="19" height="19" fill="#000"/><rect x="1720" y="120" width="7" height="7" fill="#d6d6d6"/>
  <g stroke="#222" fill="#e8e8e8"><path d="M1707,141l5,-2.500l5,2.500v6l-5,2.500l-5,-2.500z"/><path d="M1707,141l5,2.500l5,-2.500M1712,143.500v6" fill="none"/><path d="M1707,141l5,2.500v6l-5,-2.500z" fill="#999"/></g>
  <rect x="1721.500" y="138.500" width="12" height="12" fill="#3c3c3c" stroke="#f4f4f4"/>
 </svg>
 <div class="t" style="left:43px;top:23px;font-size:11px">C</div>
 <div class="t" style="left:42px;top:41px;font-size:11px">M</div>
 <div class="t" style="left:44px;top:59px;font-size:11px">Y</div>
 <div class="t" style="left:44px;top:77px;font-size:11px">K</div>
 <div class="a sl" style="left:56px;top:25px;background:linear-gradient(90deg,#2b2b2b,#0c2236)"></div>
 <div class="a sl" style="left:56px;top:43px;background:linear-gradient(90deg,#2b2b2b,#2c0a12)"></div>
 <div class="a sl" style="left:56px;top:61px;background:linear-gradient(90deg,#2b2b2b,#2c2d0a)"></div>
 <div class="a sl" style="left:56px;top:79px;background:linear-gradient(90deg,#fff,#2b2b2b)"></div>
 <svg class="a" style="left:49px;top:29px" width="130" height="66" viewBox="0 0 130 66"><g fill="#e8e4d8" stroke="#777" stroke-width=".8"><path d="M3.500,7.500h8l-4,-5.500z"/><path d="M3.500,25.500h8l-4,-5.500z"/><path d="M3.500,43.500h8l-4,-5.500z"/><path d="M103.500,61.500h8l-4,-5.500z"/></g></svg>
 <div class="a vi" style="left:163px;top:20px"><span>0</span></div>
 <div class="a vi" style="left:163px;top:38px"><span>0</span></div>
 <div class="a vi" style="left:163px;top:56px"><span>0</span></div>
 <div class="a vi" style="left:163px;top:74px"><span>100</span></div>
 <div class="t" style="left:198px;top:23px;font-size:11px">%</div>
 <div class="t" style="left:198px;top:41px;font-size:11px">%</div>
 <div class="t" style="left:198px;top:59px;font-size:11px">%</div>
 <div class="t" style="left:198px;top:77px;font-size:11px">%</div>
 <!-- spectrum -->
 <div class="a" style="left:5px;top:93px;width:200px;height:17px;border:1px solid #111;background:#fff;overflow:hidden">
  <div class="a" style="left:15px;top:0;width:168px;height:15px;background:linear-gradient(180deg,rgba(255,255,255,.95) 0,rgba(255,255,255,0) 45%,rgba(0,0,0,0) 50%,rgba(0,0,0,1) 100%),linear-gradient(90deg,#e01818 0,#f0e010 22%,#20a020 42%,#20b0e8 58%,#3030a0 72%,#d01890 90%,#e01838 100%)"></div>
  <div class="a" style="left:183px;top:7px;width:15px;height:8px;background:#000"></div>
  <svg class="a" style="left:0;top:0" width="15" height="15"><path d="M0,15l15,-15" stroke="#e01020" stroke-width="1.600"/></svg>
 </div>
</div>
<!-- ===== PINSEL ===== -->
<div class="panel" style="top:134px;height:343px">
 <div class="tabs">
  <div class="tab on" style="left:0;width:42px">Pinsel</div>
  <div class="tab" style="left:42px;width:55px">Symbole</div>
  <div class="tab" style="left:97px;width:64px">Grafikstile</div>
  <svg class="pm" viewBox="0 0 14 8"><path d="M0,1h5l-2.500,3z" fill="#333"/><path d="M6,.5h8M6,3.500h8M6,6.500h8" stroke="#333"/></svg>
 </div>
 <!-- list (panel coords: page x-1701,y-202) -->
 <div class="a" style="left:2px;top:18px;width:210px;height:307px;background:#d6d6d6;border-top:1px solid #111;border-bottom:1px solid #111"></div>
 <svg class="a" style="left:2px;top:19px" width="195" height="226" viewBox="1703 221 195 226">
  <rect x="1703" y="221" width="195" height="224" fill="#fff"/>
  <g stroke="#111" shape-rendering="crispEdges"><path d="M1703,252.500h192M1703,284.500h195M1703,316.500h195M1703,348.500h195M1703,380.500h195M1703,412.500h195M1703,444.500h195"/><path d="M1734.500,221v32M1766.500,221v32M1798.500,221v32M1830.500,221v32M1862.500,221v32M1894.500,221v32"/>
  <path d="M1734.500,381v5M1766.500,381v5M1798.500,381v5M1830.500,381v5M1862.500,381v5M1734.500,407v11M1766.500,407v11M1798.500,407v11M1830.500,407v11M1862.500,407v11M1734.500,439v5M1766.500,439v5M1798.500,439v5M1830.500,439v5M1862.500,439v5"/></g>
  <!-- row1 dots -->
  <rect x="1717.500" y="236" width="2" height="1" fill="#111"/>
  <ellipse cx="1750.500" cy="236.500" rx="2.600" ry="1.500" transform="rotate(15 1750.500 236.500)" fill="#111"/>
  <rect x="1782" y="234" width="1" height="5" fill="#aaa"/>
  <path d="M1814.500,234.500l1.500,1.500l-1.500,1.500l-1.500,-1.500z" fill="#111"/>
  <circle cx="1846.500" cy="236.500" r="3.600" fill="#000"/>
  <circle cx="1878.500" cy="236.500" r="7.800" fill="#000"/>
  <!-- row2 Einfach -->
  <rect x="1709" y="267" width="148" height="2.500" fill="#000"/>
  <text x="1863" y="272" font-family="Liberation Sans" font-size="10" fill="#111">Einfach</text>
  <!-- row3 charcoal -->
  <path d="M1709,300c20,-1.500 60,-2 100,-2.200s60,.2 83,1.200c-20,1.500 -60,2.200 -95,2.300s-70,.2 -88,-1.300z" fill="#111"/>
  <!-- row4 calligraphic -->
  <path d="M1709,332.500c6,-1.500 12,-4 20,-4h144c8,0 14,2.500 19,4c-5,1.500 -11,4 -19,4h-144c-8,0 -14,-2.500 -20,-4z" fill="#000"/>
  <!-- row5 flourish -->
  <path d="M1709,364.500c20,-2 50,-3 75,-3s25,1 30,0s4,-4 9,-4s5,3 10,2s18,-6 28,-5s4,3 10,3s17,0 20,8s0,4 -2,2s-12,-6 -25,-4s-22,6 -32,6s-10,4 -8,5s-8,2 -14,-1s-2,-4 -8,-4s-4,-2 -10,-3s-50,-1 -83,-2z" fill="#000"/>
  <!-- row6 red arrow -->
  <g fill="none" stroke-linejoin="round"><path d="M1716.500,411v-11q0,-3.500 3.500,-3.500h14M1735.500,396.500h30M1767.500,396.500h30M1800,398h12.500q3.500,0 3.500,-3.500v-13.500" stroke="#3a0a0e" stroke-width="7.200" stroke-linecap="butt"/><path d="M1716.500,411v-11q0,-3.500 3.500,-3.500h14M1735.500,396.500h30M1767.500,396.500h30M1800,398h12.500q3.500,0 3.500,-3.500v-13.500" stroke="#d81a2a" stroke-width="3.800"/>
  <path d="M1831,393h41v7h-41z" fill="#3a0a0e"/><path d="M1833.500,394.800h38v3.400h-38z" fill="#d81a2a"/>
  <path d="M1871.500,384.500l22,12l-22,12z" fill="#d01828" stroke="#3a0a0e" stroke-width="1.400"/></g>
  <!-- row7 ornament -->
  <g stroke="#555a66" fill="none"><path d="M1733,423h67" stroke="#5a5e6a" stroke-width=".9"/><path d="M1733,434h67" stroke="#6a6050" stroke-width=".9"/><path d="M1735,428.500h64" stroke="#b8b4a4" stroke-width=".6"/><path d="M1744,428.500h20M1776,428.500h20" stroke="#7a7460" stroke-width="1.200"/><ellipse cx="1749" cy="428.500" rx="3.500" ry="1.600" fill="#7a7460" stroke="none"/><ellipse cx="1759" cy="428.500" rx="2.500" ry="1.300" fill="#7a7460" stroke="none"/><ellipse cx="1781" cy="428.500" rx="3.500" ry="1.600" fill="#7a7460" stroke="none"/><ellipse cx="1791" cy="428.500" rx="2.500" ry="1.300" fill="#7a7460" stroke="none"/>
  <g id="orn"><g transform="rotate(45 1718 428)"><ellipse cx="1718" cy="428" rx="16" ry="9" stroke-width="2" stroke-dasharray="3.500 1.500"/><ellipse cx="1718" cy="428" rx="12.500" ry="5.500" stroke-width="1.400"/><path d="M1701,428h34" stroke-width="1"/><ellipse cx="1718" cy="428" rx="8" ry="2.200" fill="#555a66"/><path d="M1710,424c4,-3 12,-3 16,0M1710,432c4,3 12,3 16,0" stroke-width=".9"/></g>
  <path d="M1725,415c3,-1 6,1 5,4s-4,2 -3,-1M1704,437c0,3 3,5 6,4s1,-4 -1,-3M1728,421c2,0 3,2 2,3M1707,441c2,1 4,0 4,-2" stroke-width="1.300"/><circle cx="1727.500" cy="417.500" r="1.200" fill="#555a66"/><circle cx="1706.500" cy="439.500" r="1.200" fill="#555a66"/><path d="M1712.500,438v6M1718.500,440v4" stroke="#777" stroke-width=".8"/><path d="M1721,444c0,-3 2,-5 5,-5h7" stroke="#6a6050" stroke-width=".9"/></g>
  <g transform="translate(3534,856) scale(-1,-1)"><use href="#orn"/></g></g>
 </svg>
 <!-- scrollbar -->
 <div class="a" style="left:197px;top:19px;width:15px;height:306px;background:linear-gradient(90deg,#f2f2f2,#e6e6e6)"></div>
 <svg class="a" style="left:201px;top:26px" width="9" height="6"><path d="M0,5h8l-4,-5z" fill="#999"/></svg>
 <svg class="a" style="left:201px;top:315px" width="9" height="6"><path d="M0,0h8l-4,5z" fill="#999"/></svg>
 <!-- footer icons -->
 <svg class="a" style="left:0;top:326px" width="214" height="17" viewBox="1701 528 214 17">
  <g stroke="#444" fill="#e8e8e8"><rect x="1712.500" y="530.500" width="7" height="6"/><rect x="1715.500" y="533.500" width="8" height="6" fill="#bbb"/><path d="M1725,541l3,-3v3z" fill="#222" stroke="none"/></g>
  <path d="M1780,531l8,8M1788,531l-8,8" stroke="#999" stroke-width="1.200"/>
  <g stroke="#999" fill="none"><path d="M1806,539l7,-8" stroke-width="1.800"/><path d="M1812,533h8M1814,536h9M1816,539h5"/></g>
  <g stroke="#333" fill="#fff"><rect x="1849.500" y="531.500" width="8" height="8"/><rect x="1849.500" y="535.500" width="4" height="4" fill="#666"/></g>
  <g stroke="#333" fill="#eee"><path d="M1880.500,532.500h7l-1,8h-5z"/><path d="M1879,532.500h10M1882,530.500h4" /><path d="M1882.500,534v5M1885.500,534v5" stroke="#777"/></g>
  <g fill="#999"><rect x="1910" y="541" width="1" height="1"/><rect x="1908" y="541" width="1" height="1"/><rect x="1910" y="539" width="1" height="1"/><rect x="1906" y="541" width="1" height="1"/><rect x="1908" y="539" width="1" height="1"/><rect x="1910" y="537" width="1" height="1"/></g>
 </svg>
</div>
<!-- ===== EBENEN ===== (page y 547..757 → dock top 479) -->
<div class="panel" style="top:479px;height:210px">
 <div class="tabs">
  <div class="tab on" style="left:0;width:47px">Ebenen</div>
  <div class="tab" style="left:47px;width:50px">Zeichen</div>
  <div class="tab" style="left:97px;width:46px">Absatz</div>
  <svg class="pm" viewBox="0 0 14 8"><path d="M0,1h5l-2.500,3z" fill="#333"/><path d="M6,.5h8M6,3.500h8M6,6.500h8" stroke="#333"/></svg>
 </div>
 <!-- list bg: page y 565..739 -->
 <div class="a" style="left:2px;top:18px;width:210px;height:175px;background:#d6d6d6;border-top:1px solid #111;border-bottom:1px solid #111"></div>
 <svg class="a" style="left:2px;top:19px" width="195" height="82" viewBox="1703 566 195 82">
  <defs><g id="eye"><path d="M0,4.500c3,-4.500 10,-4.500 13,0c-3,4 -10,4 -13,0z" fill="#fff" stroke="#222" stroke-width="1"/><circle cx="6.500" cy="4.500" r="2.800" fill="#222"/><path d="M0,3c3,-4 10,-4 13,0" fill="none" stroke="#222" stroke-width="1.600"/></g></defs>
  <!-- row backgrounds -->
  <rect x="1748" y="586" width="150" height="20" fill="#fff"/><rect x="1778" y="586" width="120" height="20" fill="#3399ff"/>
  <rect x="1748" y="606" width="150" height="20" fill="#fff"/>
  <g stroke="#a8a8a8" shape-rendering="crispEdges"><path d="M1703,585.500h45M1703,605.500h45M1703,625.500h45"/><path d="M1748,585.500h150M1748,625.500h150" stroke="#999"/></g>
  <g stroke="#111" shape-rendering="crispEdges"><path d="M1703,646.500h195M1747.500,566v80"/></g>
  <!-- eye + lock cells -->
  <g fill="#c9c9c9" stroke="#aaa" shape-rendering="crispEdges"><rect x="1704.500" y="567.500" width="16" height="17"/><rect x="1704.500" y="587.500" width="16" height="17"/><rect x="1704.500" y="607.500" width="16" height="17"/><rect x="1704.500" y="627.500" width="16" height="17"/><rect x="1722.500" y="569.500" width="13" height="13" fill="#d0d0d0"/><rect x="1722.500" y="589.500" width="13" height="13" fill="#d0d0d0"/><rect x="1722.500" y="609.500" width="13" height="13" fill="#d0d0d0"/><rect x="1722.500" y="629.500" width="13" height="13" fill="#d0d0d0"/></g>
  <use href="#eye" x="1706" y="571"/><use href="#eye" x="1706" y="591"/><use href="#eye" x="1706" y="611"/><use href="#eye" x="1706" y="631"/>
  <!-- lock -->
  <g><rect x="1725" y="634" width="9" height="7" fill="#444" stroke="#222"/><path d="M1727,634v-2.500a2.500,2.500 0 0 1 5,0v2.500" fill="none" stroke="#222" stroke-width="1.400"/><rect x="1727" y="636" width="5" height="1" fill="#aaa"/><rect x="1727" y="638" width="5" height="1" fill="#aaa"/></g>
  <!-- colour bars -->
  <rect x="1739" y="569" width="4" height="14" fill="#108040"/><rect x="1739" y="589" width="4" height="14" fill="#108040"/><rect x="1739" y="609" width="4" height="14" fill="#108040"/><rect x="1739" y="629" width="4" height="14" fill="#f06010"/>
  <!-- disclosure -->
  <path d="M1751.500,572.500h9l-4.500,6z" fill="#fff" stroke="#5570a0"/><path d="M1752.500,631.500v9l5,-4.500z" fill="#fff" stroke="#5570a0"/>
  <!-- thumbs -->
  <g fill="#fff" stroke="#111"><rect x="1765.500" y="568.500" width="15" height="15"/><rect x="1780.500" y="588.500" width="15" height="15"/><rect x="1780.500" y="608.500" width="15" height="15" fill="#e05a20"/><rect x="1765.500" y="628.500" width="15" height="15"/></g>
  <path d="M1773,571c2,0 3,2 2.500,4.500s-1.500,2 -1,4s-1,3 -2,3s-2,-1 -1.500,-3s-.5,-3 0,-5s1,-3.500 2,-3.500z" fill="none" stroke="#aaa" stroke-width=".8"/>
  <path d="M1788,591c2,0 3,2 2.500,4.500s-1.500,2 -1,4s-1,3 -2,3s-2,-1 -1.500,-3s-.5,-3 0,-5s1,-3.500 2,-3.500z" fill="none" stroke="#aaa" stroke-width=".8"/>
  <path d="M1768.500,629v14M1777.500,629v14" stroke="#e0a080" stroke-width=".8"/><path d="M1773,631c1.500,0 2,2 1.500,4s-1,2 -.5,4s-.5,3 -1.500,3" fill="none" stroke="#ccc" stroke-width=".7"/>
  <!-- names -->
  <g font-family="Liberation Sans" font-size="10.500" letter-spacing="-.4" fill="#111"><text x="1785" y="580">Meine Ebene</text><text x="1800" y="600" fill="#fff" font-weight="bold" letter-spacing="-.55">Schuh</text><text x="1800" y="620">&lt;Pfad&gt;</text><text x="1785" y="640">Vorlage</text></g>
  <!-- target circles -->
  <g fill="#fff" stroke="#333" stroke-width="1.200"><circle cx="1878.500" cy="576" r="3.800" fill="#d6d6d6"/><circle cx="1878.500" cy="596" r="3.800" fill="#3399ff"/><circle cx="1878.500" cy="616" r="3.800"/><circle cx="1878.500" cy="636" r="3.800" fill="#d6d6d6"/></g>
  <rect x="1889" y="573" width="5" height="5" fill="#108040"/><rect x="1889" y="593" width="5" height="5" fill="#108040"/>
  <path d="M1892,566h6v6z" fill="#111"/>
 </svg>
 <!-- scrollbar -->
 <div class="a" style="left:197px;top:19px;width:15px;height:173px;background:linear-gradient(90deg,#f2f2f2,#e6e6e6)"></div>
 <svg class="a" style="left:201px;top:26px" width="9" height="6"><path d="M0,5h8l-4,-5z" fill="#999"/></svg>
 <svg class="a" style="left:201px;top:183px" width="9" height="6"><path d="M0,0h8l-4,5z" fill="#999"/></svg>
 <!-- footer (page y 740..757) -->
 <div class="t" style="left:11px;top:195px;font-size:10.500px;letter-spacing:-.45px">2 Ebenen</div>
 <svg class="a" style="left:0;top:193px" width="214" height="17" viewBox="1701 740 214 17">
  <g stroke="#999" fill="none"><rect x="1783.500" y="743.500" width="4" height="4" stroke-dasharray="1 1"/><circle cx="1791" cy="749" r="3.500" fill="#ddd" stroke="#888"/><path d="M1791,749v-3.500a3.500,3.500 0 0 1 3.500,3.500z" fill="#888" stroke="none"/></g>
  <g stroke="#666" fill="#eee"><path d="M1812,746h4M1814.500,744l2,2l-2,2" fill="none"/><rect x="1819.500" y="745.500" width="6" height="6"/><rect x="1819.500" y="748.500" width="3" height="3" fill="#888"/></g>
  <g stroke="#333" fill="#fff"><rect x="1847.500" y="744.500" width="8" height="8"/><rect x="1847.500" y="748.500" width="4" height="4" fill="#666"/></g>
  <g stroke="#333" fill="#eee"><path d="M1879.500,745.500h7l-1,8h-5z"/><path d="M1878,745.500h10M1881,743.500h4" /><path d="M1881.500,747v5M1884.500,747v5" stroke="#777"/></g>
  <g fill="#999"><rect x="1910" y="753" width="1" height="1"/><rect x="1908" y="753" width="1" height="1"/><rect x="1910" y="751" width="1" height="1"/><rect x="1906" y="753" width="1" height="1"/><rect x="1908" y="751" width="1" height="1"/><rect x="1910" y="749" width="1" height="1"/></g>
 </svg>
</div>
<!-- ===== AUSSEHEN ===== (page y 760..893 → dock top 692) -->
<div class="panel" style="top:692px;height:133px">
 <div class="tabs">
  <div class="tab on" style="left:0;width:56px">Aussehen</div>
  <div class="tab" style="left:56px;width:51px">Verlauf</div>
  <div class="tab" style="left:107px;width:67px">Transparenz</div>
  <svg class="pm" viewBox="0 0 14 8"><path d="M0,1h5l-2.500,3z" fill="#333"/><path d="M6,.5h8M6,3.500h8M6,6.500h8" stroke="#333"/></svg>
 </div>
 <!-- list page y 779..875 -->
 <svg class="a" style="left:2px;top:19px" width="195" height="97" viewBox="1703 779 195 97">
  <rect x="1703" y="779" width="195" height="96" fill="#d6d6d6"/>
  <rect x="1726" y="804" width="169" height="23" fill="#3399ff"/>
  <g stroke="#a0a0a0" shape-rendering="crispEdges"><path d="M1703,803.500h195M1703,827.500h195M1703,851.500h195"/></g>
  <g stroke="#111" shape-rendering="crispEdges"><path d="M1703,875.500h195M1725.500,803v72"/></g>
  <rect x="1706.500" y="781.500" width="17" height="19" fill="#fff" stroke="#111"/>
  <g fill="#c9c9c9" stroke="#aaa" shape-rendering="crispEdges"><rect x="1704.500" y="806.500" width="17" height="18"/><rect x="1704.500" y="830.500" width="17" height="18"/><rect x="1704.500" y="854.500" width="17" height="18"/></g>
  <use href="#eye" x="1707" y="811"/><use href="#eye" x="1707" y="835"/><use href="#eye" x="1707" y="859" opacity=".45"/>
  <g font-family="Liberation Sans" font-size="10.500" fill="#111"><text x="1738" y="795" font-weight="bold">Pfad</text><text x="1738" y="819" fill="#fff">Kontur:</text><text x="1737" y="843">Fläche:</text><text x="1738" y="867" fill="#1f2fd0">Deckkraft:</text><text x="1792" y="867">Standard</text></g>
  <path d="M1738,821.500h35" stroke="#fff" stroke-dasharray="1 1"/><path d="M1738,869.500h48" stroke="#1f2fd0" stroke-dasharray="1 1"/>
  <path d="M1728.500,810.500v9l5,-4.500z" fill="#3399ff" stroke="#111"/><path d="M1728.500,834.500v9l5,-4.500z" fill="#d6d6d6" stroke="#111"/>
  <!-- stroke swatch + dropdown -->
  <rect x="1781" y="806" width="19" height="19" fill="#000" stroke="#ddd"/><rect x="1787" y="812" width="7" height="7" fill="#fff"/>
  <rect x="1801.500" y="806.500" width="11" height="18" fill="#d6d6d6" stroke="#bbb"/><path d="M1803.500,814h7l-3.500,4z" fill="#333"/>
  <!-- weight input -->
  <rect x="1815.500" y="806.500" width="64" height="18" fill="#fff" stroke="#9ab"/><rect x="1817.500" y="808.500" width="11" height="14" fill="#f2f2f2" stroke="#b5b5b5"/><path d="M1820,814h6l-3,-4zM1820,817h6l-3,4z" fill="#5577aa"/>
  <text x="1835" y="820" font-family="Liberation Sans" font-size="10.500" fill="#111">1 pt</text><path d="M1867,814h8l-4,4.500z" fill="#111"/>
  <!-- fill swatch -->
  <rect x="1783.500" y="830.500" width="17" height="17" fill="#d6d6d6" stroke="#111"/><rect x="1786.500" y="833.500" width="11" height="11" fill="#fff" stroke="#111"/><path d="M1787,844l10,-10" stroke="#e01020" stroke-width="1.600"/>
 </svg>
 <div class="a" style="left:197px;top:19px;width:15px;height:97px;background:linear-gradient(90deg,#f2f2f2,#e6e6e6)"></div>
 <svg class="a" style="left:201px;top:26px" width="9" height="6"><path d="M0,5h8l-4,-5z" fill="#999"/></svg>
 <svg class="a" style="left:201px;top:104px" width="9" height="6"><path d="M0,0h8l-4,5z" fill="#999"/></svg>
 <!-- footer page y 876..893 -->
 <svg class="a" style="left:0;top:116px" width="214" height="17" viewBox="1701 876 214 17">
  <rect x="1715" y="879" width="9" height="9" fill="#555"/><rect x="1718" y="882" width="3" height="3" fill="#ddd"/>
  <rect x="1748.500" y="878.500" width="9" height="9" fill="#fff" stroke="#555"/>
  <text x="1781" y="888" font-family="Liberation Serif" font-style="italic" font-weight="bold" font-size="13" fill="#333">fx</text><path d="M1794,889l3,-3v3z" fill="#222"/>
  <g stroke="#666" fill="none"><circle cx="1819" cy="883" r="3.800"/><path d="M1816.500,880.500l5,5"/></g>
  <g stroke="#333" fill="#fff"><rect x="1849.500" y="879.500" width="8" height="8"/><rect x="1849.500" y="883.500" width="4" height="4" fill="#666"/></g>
  <g stroke="#333" fill="#eee"><path d="M1880.500,880.500h7l-1,8h-5z"/><path d="M1879,880.500h10M1882,878.500h4" /><path d="M1882.500,882v5M1885.500,882v5" stroke="#777"/></g>
 </svg>
</div>
<!-- ===== AUSRICHTEN ===== (page y 896..1035 → dock top 828) -->
<div class="panel" style="top:828px;height:139px">
 <div class="tabs">
  <div class="tab on" style="left:0;width:73px;padding-left:2px">Ausrichten</div>
  <div class="tab" style="left:73px;width:64px">Pathfinder</div>
  <svg class="a" style="left:3px;top:5px" width="7" height="8" viewBox="0 0 7 8"><path d="M.8,3.200l2.700,-2.500l2.700,2.500M.8,4.800l2.700,2.500l2.700,-2.500" fill="none" stroke="#222" stroke-width="1.200"/></svg>
  <svg class="pm" viewBox="0 0 14 8"><path d="M0,1h5l-2.500,3z" fill="#333"/><path d="M6,.5h8M6,3.500h8M6,6.500h8" stroke="#333"/></svg>
 </div>
 <div class="t" style="left:5px;top:22px;font-size:10.500px">Ankerpunkte ausrichten:</div>
 <div class="t" style="left:5px;top:60px;font-size:10.500px">Ankerpunkte verteilen:</div>
 <div class="t" style="left:5px;top:99px;font-size:10.200px">Abstand verteilen:</div>
 <div class="t" style="left:139px;top:101px;font-size:10.200px">Ausrichten an:</div>
 <svg class="a" style="left:0;top:18px" width="214" height="121" viewBox="1701 914 214 121" shape-rendering="crispEdges">
  <g stroke="#a8a8a8"><path d="M1706,952.500h204M1706,989.500h204M1835.500,997v28"/></g><g stroke="#f0f0f0"><path d="M1706,953.500h204M1706,990.500h204M1836.500,997v28"/></g>
  <g fill="#d0d0d0" stroke="#333">
   <!-- align row y=939 -->
   <path d="M1713.500,933v13"/><rect x="1715.500" y="934.500" width="6" height="4"/><rect x="1715.500" y="940.500" width="11" height="4"/>
   <path d="M1754.500,932v14"/><rect x="1751.500" y="934.500" width="6" height="4"/><rect x="1748.500" y="940.500" width="12" height="4"/>
   <path d="M1795.500,933v13"/><rect x="1787.500" y="934.500" width="6" height="4"/><rect x="1782.500" y="940.500" width="11" height="4"/>
   <path d="M1815,934.500h17"/><rect x="1818.500" y="936.500" width="4" height="9"/><rect x="1825.500" y="936.500" width="4" height="4"/>
   <path d="M1848,939.500h18"/><rect x="1851.500" y="934.500" width="4" height="10"/><rect x="1858.500" y="937.500" width="4" height="4"/>
   <path d="M1882,944.500h17"/><rect x="1885.500" y="934.500" width="4" height="9"/><rect x="1892.500" y="939.500" width="4" height="4"/>
   <!-- distribute row y=977 -->
   <path d="M1713,972.500h16M1713,978.500h16"/><rect x="1716.500" y="974.500" width="10" height="3"/><rect x="1718.500" y="980.500" width="6" height="3"/>
   <path d="M1747,974.500h16M1747,980.500h16"/><rect x="1750.500" y="972.500" width="10" height="4"/><rect x="1752.500" y="978.500" width="6" height="4"/>
   <path d="M1781,976.500h16M1781,983.500h16"/><rect x="1786.500" y="973.500" width="6" height="3"/><rect x="1784.500" y="979.500" width="10" height="4"/>
   <path d="M1818.500,971v13M1825.500,971v13"/><rect x="1820.500" y="973.500" width="3" height="9"/><rect x="1827.500" y="975.500" width="3" height="5"/>
   <path d="M1854.500,970v15M1862.500,970v15"/><rect x="1852.500" y="973.500" width="4" height="9"/><rect x="1860.500" y="975.500" width="4" height="5"/>
   <path d="M1889.500,971v13M1896.500,971v13"/><rect x="1885.500" y="973.500" width="3" height="9"/><rect x="1892.500" y="975.500" width="3" height="5"/>
   <!-- spacing row y=1017 -->
   <path d="M1713,1014.500h16M1713,1018.500h16"/><rect x="1717.500" y="1010.500" width="8" height="3"/><rect x="1719.500" y="1020.500" width="3" height="2" fill="#fff"/>
   <path d="M1751.500,1010v12M1755.500,1010v12"/><rect x="1747.500" y="1010.500" width="2" height="3" fill="#fff"/><rect x="1757.500" y="1012.500" width="3" height="9"/>
   <rect x="1777.500" y="1008.500" width="52" height="18" fill="#dedede" stroke="#b0b0b0"/><rect x="1779.500" y="1010.500" width="11" height="14" fill="#e4e4e4" stroke="#bbb"/>
   <rect x="1864.500" y="1010.500" width="9" height="14" fill="#e8e8e8"/><rect x="1866.500" y="1013.500" width="5" height="8" fill="#999"/><path d="M1869.500,1008v5M1869.500,1022v4M1862,1017.500h4M1872,1017.500h4"/>
  </g>
  <path d="M1782,1016h6l-3,-4zM1782,1019h6l-3,4z" fill="#bbb" shape-rendering="auto"/>
  <path d="M1879,1015h6l-3,4z" fill="#222" shape-rendering="auto"/>
 </svg>
</div>
</div>
<!-- RED ANNOTATION BOXES -->
<div class="a rb" style="left:24px;top:86px;width:41px;height:37px"></div>
<div class="a rb" style="left:3px;top:138px;width:37px;height:33px"></div>
<div class="a rb" style="left:5px;top:435px;width:58px;height:55px"></div>
<div class="a rb" style="left:1698px;top:757px;width:63px;height:24px"></div>
<div class="a rb" style="left:1721px;top:798px;width:179px;height:54px"></div>
</body>
</html>
